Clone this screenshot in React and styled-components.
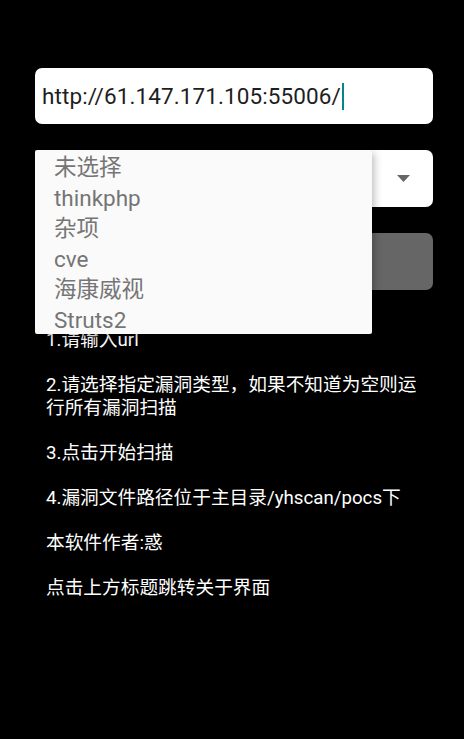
import styled, { createGlobalStyle } from "styled-components";

const GlobalStyle = createGlobalStyle`
  html, body {
    margin: 0;
    padding: 0;
    background: #000;
  }
  body {
    font-family: Roboto, "Noto Sans CJK SC", sans-serif;
  }
`;

const Screen = styled.div`
  min-height: 739px;
  background: #000;
  padding: 68px 31px 0 35px;
  box-sizing: border-box;
  display: flex;
  flex-direction: column;
`;

const UrlField = styled.div`
  height: 56px;
  border-radius: 7px;
  background: #fff;
  display: flex;
  align-items: center;
  padding-left: 7px;
  font-size: 22.5px;
  color: #1e1e1e;
  letter-spacing: 0.1px;
`;

const Caret = styled.span`
  display: inline-block;
  width: 2px;
  height: 27px;
  margin-left: 1px;
  background: #018786;
`;

const SpinnerWrap = styled.div`
  position: relative;
  margin-top: 26px;
`;

const Spinner = styled.div`
  height: 57px;
  border-radius: 7px;
  background: #fff;
  display: flex;
  align-items: center;
  justify-content: flex-end;
  padding-right: 23px;
`;

const Popup = styled.ul`
  position: absolute;
  top: 0;
  left: 0;
  width: 337px;
  height: 184px;
  margin: 0;
  padding: 2px 0 0;
  list-style: none;
  background: #fafafa;
  border-radius: 2px;
  box-shadow: 2px 3px 9px rgba(0, 0, 0, 0.28);
  overflow: hidden;
  box-sizing: border-box;
  z-index: 2;
`;

const PopupItem = styled.li`
  height: 30.6px;
  line-height: 30.6px;
  padding-left: 19px;
  font-size: 22.5px;
  color: #757575;
  white-space: nowrap;
`;

const ScanButton = styled.button`
  margin-top: 26px;
  height: 57px;
  border: none;
  border-radius: 7px;
  background: #666;
  color: #fff;
  font-family: inherit;
  font-size: 19px;
`;

const Help = styled.p`
  margin: 39px 0 0 11px;
  width: 380px;
  font-size: 18.7px;
  line-height: 22.5px;
  color: #fff;
  white-space: pre-line;
`;

const options = ["未选择", "thinkphp", "杂项", "cve", "海康威视", "Struts2"];

const helpText = `1.请输入url

2.请选择指定漏洞类型，如果不知道为空则运行所有漏洞扫描

3.点击开始扫描

4.漏洞文件路径位于主目录/yhscan/pocs下

本软件作者:惑

点击上方标题跳转关于界面`;

export default function App() {
  return (
    <>
      <GlobalStyle />
      <Screen>
        <UrlField>
          http://61.147.171.105:55006/
          <Caret />
        </UrlField>

        <SpinnerWrap>
          <Spinner>
            <svg width="13" height="7" viewBox="0 0 13 7">
              <polygon points="0,0 13,0 6.5,7" fill="#666" />
            </svg>
          </Spinner>
          <Popup>
            {options.map((o) => (
              <PopupItem key={o}>{o}</PopupItem>
            ))}
          </Popup>
        </SpinnerWrap>

        <ScanButton>开始扫描</ScanButton>

        <Help>{helpText}</Help>
      </Screen>
    </>
  );
}
